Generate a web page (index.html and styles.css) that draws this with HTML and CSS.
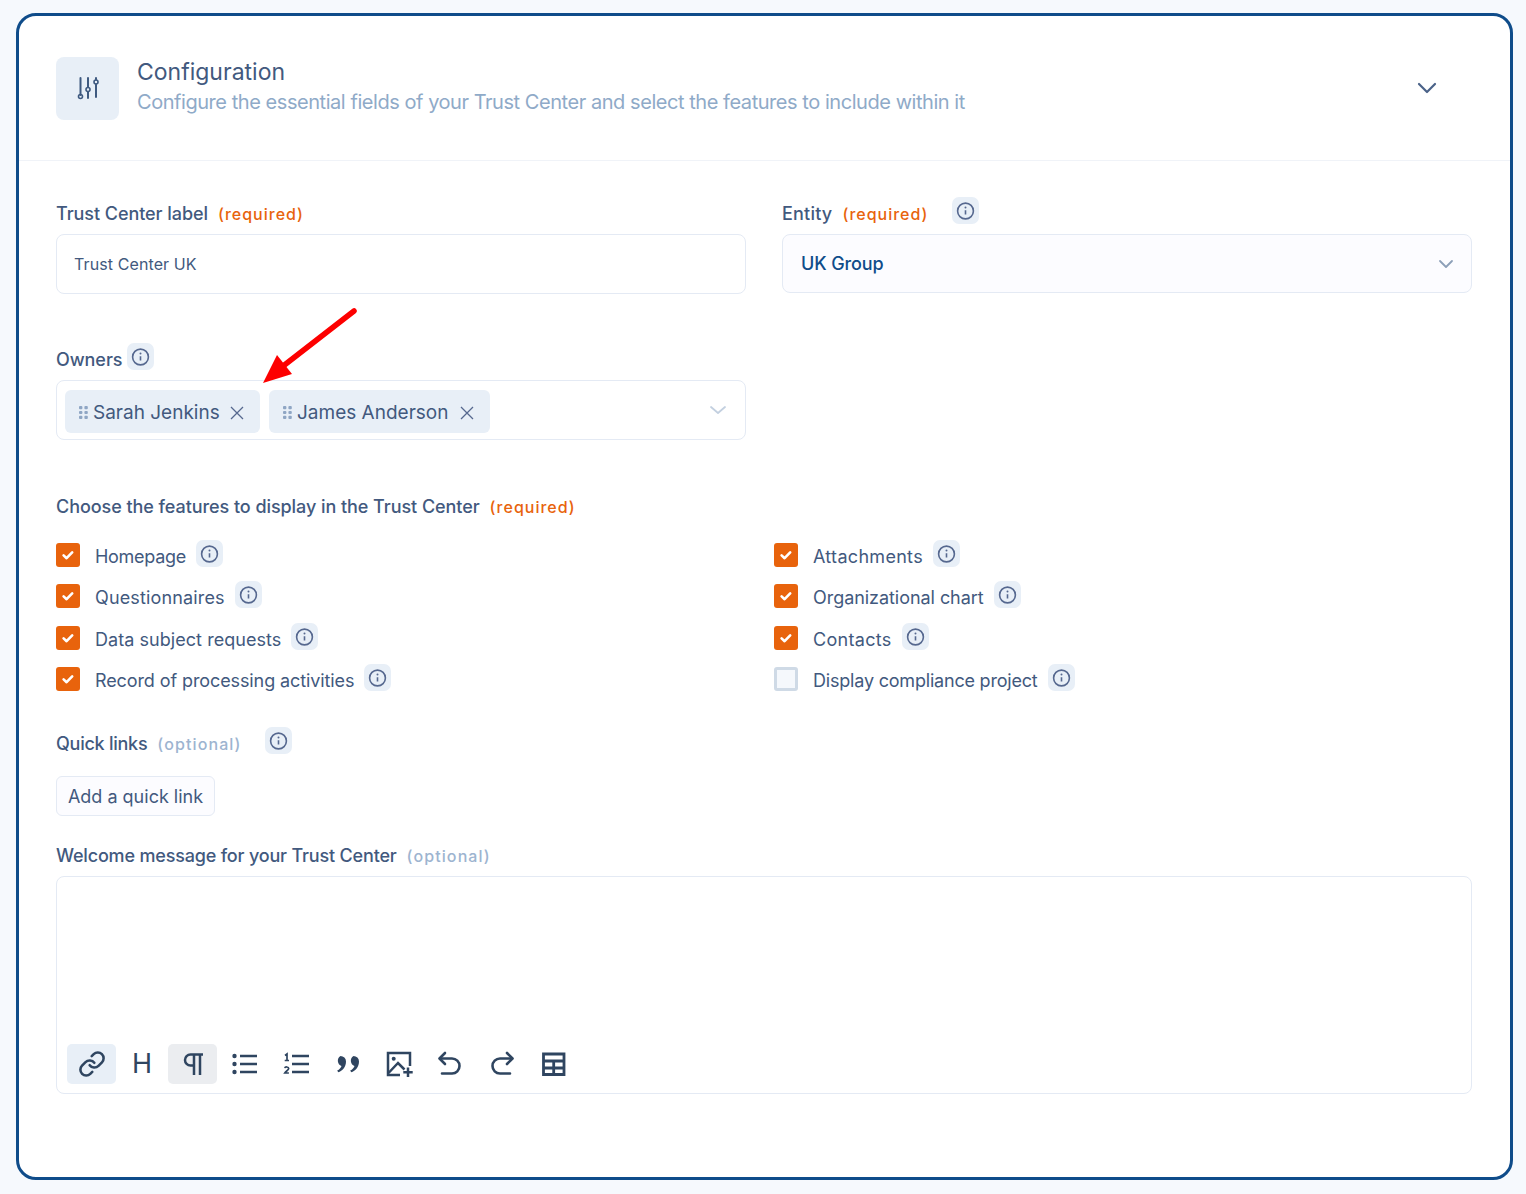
FILE: index.html
```html
<!DOCTYPE html>
<html lang="en">
<head>
<meta charset="utf-8">
<title>Configuration</title>
<link rel="stylesheet" href="styles.css">
</head>
<body>
<svg width="0" height="0" class="defs">
  <symbol id="info" viewBox="0 0 27 27">
    <circle cx="13.500" cy="14" r="7.900" fill="none" stroke="#56688f" stroke-width="1.600"/>
    <path d="M13.500 13.200v4.400" stroke="#56688f" stroke-width="1.600" fill="none"/>
    <circle cx="13.500" cy="10.600" r="1" fill="#56688f"/>
  </symbol>
  <symbol id="check" viewBox="0 0 24 24">
    <path d="M7.600 12.400l3 2.800 5.600-5.800" fill="none" stroke="#fff" stroke-width="2.600" stroke-linecap="round" stroke-linejoin="round"/>
  </symbol>
  <symbol id="grip" viewBox="0 0 9 13">
    <g fill="#8fa6c4"><rect x="0" y="0" width="3.400" height="3.200" rx="1"/><rect x="5.400" y="0" width="3.400" height="3.200" rx="1"/><rect x="0" y="4.900" width="3.400" height="3.200" rx="1"/><rect x="5.400" y="4.900" width="3.400" height="3.200" rx="1"/><rect x="0" y="9.800" width="3.400" height="3.200" rx="1"/><rect x="5.400" y="9.800" width="3.400" height="3.200" rx="1"/></g>
  </symbol>
  <symbol id="close" viewBox="0 0 14 14">
    <path d="M1 1l12 12M13 1L1 13" fill="none" stroke="#56688f" stroke-width="1.300"/>
  </symbol>
</svg>
<main class="card">
  <header class="head">
    <div class="head-icon">
      <svg width="24" height="24" viewBox="0 0 24 24" fill="none" stroke="#3f5a80" stroke-width="2" stroke-linecap="round">
        <path d="M4.500 2v17"/><circle cx="4.500" cy="20.500" r="2" stroke-width="1.600"/>
        <path d="M12 2v9M12 16v6"/><circle cx="12" cy="13.500" r="2" stroke-width="1.600"/>
        <path d="M20 2v1.500M20 8.500V21"/><circle cx="20" cy="6" r="2" stroke-width="1.600"/>
      </svg>
    </div>
    <div class="head-text">
      <h1 class="title">Configuration</h1>
      <p class="subtitle">Configure the essential fields of your Trust Center and select the features to include within it</p>
    </div>
    <svg class="head-chev" width="20" height="12" viewBox="0 0 20 12" fill="none" stroke="#4a6288" stroke-width="2.200" stroke-linecap="round" stroke-linejoin="round"><path d="M2 2l8 8 8-8"/></svg>
  </header>

  <form class="body">
    <div class="two">
      <div class="field">
        <div class="label-row"><span class="label">Trust Center label</span><span class="req">(required)</span></div>
        <div class="input">Trust Center UK</div>
      </div>
      <div class="field">
        <div class="label-row"><span class="label label-wide">Entity</span><span class="req">(required)</span><svg class="chip chip-entity"><use href="#info"/></svg></div>
        <div class="select"><span>UK Group</span>
          <svg width="16" height="10" viewBox="0 0 16 10" fill="none" stroke="#8c9fb8" stroke-width="1.800" stroke-linecap="round" stroke-linejoin="round"><path d="M2 2l6 6 6-6"/></svg>
        </div>
      </div>
    </div>

    <div class="two owners">
      <div class="field">
        <div class="label-row tight"><span class="label">Owners</span><svg class="chip"><use href="#info"/></svg></div>
        <div class="multi">
          <span class="tag tag-a"><svg class="grip"><use href="#grip"/></svg>Sarah Jenkins<svg class="x"><use href="#close"/></svg></span>
          <span class="tag tag-b"><svg class="grip"><use href="#grip"/></svg>James Anderson<svg class="x"><use href="#close"/></svg></span>
          <svg class="multi-chev" width="18" height="10" viewBox="0 0 18 10" fill="none" stroke="#c3d0e0" stroke-width="1.800" stroke-linecap="round" stroke-linejoin="round"><path d="M2 2l7 6 7-6"/></svg>
        </div>
      </div>
    </div>

    <div class="label-row features-label"><span class="label">Choose the features to display in the Trust Center</span><span class="req">(required)</span></div>
    <div class="checks">
      <div class="check-row"><span class="box on"><svg><use href="#check"/></svg></span><span class="check-text narrow-2">Homepage</span><svg class="chip"><use href="#info"/></svg></div>
      <div class="check-row"><span class="box on"><svg><use href="#check"/></svg></span><span class="check-text wide-1">Attachments</span><svg class="chip"><use href="#info"/></svg></div>
      <div class="check-row"><span class="box on"><svg><use href="#check"/></svg></span><span class="check-text wide-2">Questionnaires</span><svg class="chip"><use href="#info"/></svg></div>
      <div class="check-row"><span class="box on"><svg><use href="#check"/></svg></span><span class="check-text narrow-1">Organizational chart</span><svg class="chip"><use href="#info"/></svg></div>
      <div class="check-row"><span class="box on"><svg><use href="#check"/></svg></span><span class="check-text wide-3">Data subject requests</span><svg class="chip"><use href="#info"/></svg></div>
      <div class="check-row"><span class="box on"><svg><use href="#check"/></svg></span><span class="check-text wide-1">Contacts</span><svg class="chip"><use href="#info"/></svg></div>
      <div class="check-row"><span class="box on"><svg><use href="#check"/></svg></span><span class="check-text narrow-3">Record of processing activities</span><svg class="chip"><use href="#info"/></svg></div>
      <div class="check-row"><span class="box off"></span><span class="check-text narrow-4">Display compliance project</span><svg class="chip"><use href="#info"/></svg></div>
    </div>

    <div class="label-row quick-label"><span class="label label-quick">Quick links</span><span class="opt">(optional)</span><svg class="chip chip-quick"><use href="#info"/></svg></div>
    <button type="button" class="add">Add a quick link</button>

    <div class="label-row welcome-label"><span class="label label-welcome">Welcome message for your Trust Center</span><span class="opt">(optional)</span></div>
    <div class="editor">
      <div class="toolbar">
        <span class="tool tool-blue"><svg width="28" height="28" viewBox="0 0 24 24" fill="none" stroke="#2f4560" stroke-width="2.200" stroke-linecap="round" stroke-linejoin="round"><path d="M10 13a5 5 0 0 0 7.540.540l3-3a5 5 0 0 0-7.070-7.070l-1.720 1.710"/><path d="M14 11a5 5 0 0 0-7.540-.540l-3 3a5 5 0 0 0 7.070 7.070l1.710-1.710"/></svg></span>
        <span class="tool tool-h">H</span>
        <span class="tool tool-grey"><svg width="28" height="28" viewBox="0 0 28 28" fill="none" stroke="#2f4560" stroke-width="2.500"><path d="M24 4.500H11.500a5.500 5.500 0 0 0 0 11H15"/><path d="M15 4.500V25M21 4.500V25"/></svg></span>
        <span class="tool"><svg width="28" height="28" viewBox="0 0 28 28" fill="none" stroke="#2f4560" stroke-width="2.700"><path d="M10 6h17M10 14h17M10 22h17"/><g fill="#2f4560" stroke="none"><circle cx="4.500" cy="6" r="2.200"/><circle cx="4.500" cy="14" r="2.200"/><circle cx="4.500" cy="22" r="2.200"/></g></svg></span>
        <span class="tool"><svg width="28" height="28" viewBox="0 0 28 28" fill="none" stroke="#2f4560" stroke-width="2.700"><path d="M10 6h17M10 14h17M10 22h17"/><path d="M3 5.500l2-1.500v6.500M2.700 10.500h4.300" stroke-width="1.700"/><path d="M2.800 18.200c.3-1.700 3.900-1.700 3.900.4 0 1.500-2.500 2.300-3.900 4.400h4.100" stroke-width="1.700"/></svg></span>
        <span class="tool"><svg width="28" height="28" viewBox="0 0 28 28" fill="#2f4560"><path d="M7.500 6a5.500 5.500 0 0 1 5.500 5.500c0 5.500-3.500 9.500-7.800 10.800l-1-1.700c2.200-1.100 3.800-2.900 4.300-4.700A5.500 5.500 0 0 1 7.500 6zM20.500 6a5.500 5.500 0 0 1 5.500 5.500c0 5.500-3.500 9.500-7.800 10.800l-1-1.700c2.200-1.100 3.800-2.900 4.300-4.700A5.500 5.500 0 0 1 20.500 6z"/></svg></span>
        <span class="tool"><svg width="28" height="28" viewBox="0 0 28 28" fill="none" stroke="#2f4560" stroke-width="2.500"><path d="M15 25H3V3h22v13"/><path d="M3.500 23l9.500-10 6.500 6.500"/><circle cx="8.700" cy="8.700" r="2" fill="#2f4560" stroke="none"/><path d="M23 17.500V27M18.300 22.300h9.400"/></svg></span>
        <span class="tool"><svg width="28" height="28" viewBox="0 0 28 28" fill="none" stroke="#2f4560" stroke-width="2.600" stroke-linecap="round" stroke-linejoin="round"><path d="M9 3L3.500 8.500 9 14"/><path d="M4 8.500h12a7.500 7.500 0 0 1 0 15H6"/></svg></span>
        <span class="tool"><svg width="28" height="28" viewBox="0 0 28 28" fill="none" stroke="#2f4560" stroke-width="2.600" stroke-linecap="round" stroke-linejoin="round"><path d="M19 3l5.500 5.500L19 14"/><path d="M24 8.500H12a7.500 7.500 0 0 0 0 15h10"/></svg></span>
        <span class="tool"><svg width="28" height="28" viewBox="0 0 28 28" fill="none" stroke="#2f4560" stroke-width="2.800"><path d="M4.500 4h20.500v20.500H4.500zM4.500 11h20.500M4.500 18h20.500M14.700 11v13.500"/></svg></span>
      </div>
    </div>
  </form>

  <svg class="arrow" width="110" height="90" viewBox="0 0 110 90">
    <path d="M92 4L16 63" stroke="#fd0000" stroke-width="5.500" stroke-linecap="round" fill="none"/>
    <path d="M1 76l14-28 15 19z" fill="#fd0000"/>
  </svg>
</main>
</body>
</html>
```
FILE: styles.css
```css
* { box-sizing: border-box; }
html, body { margin: 0; padding: 0; }
body {
  background: #f6f9fd;
  padding: 13px 13px 14px 16px;
  font-family: "Inter", "Open Sans", sans-serif;
  color: #42597e;
  height: 1194px;
  overflow: hidden;
}
.defs { position: absolute; }
.card {
  position: relative;
  height: 1167px;
  background: #fff;
  border: 3px solid #0f4c8a;
  border-radius: 20px;
}
.head {
  display: flex;
  align-items: center;
  height: 145px;
  padding: 0 73px 0 37px;
  border-bottom: 1px solid #f0f3f8;
}
.head-icon {
  width: 63px;
  height: 63px;
  border-radius: 8px;
  background: #e8eff7;
  display: flex;
  align-items: center;
  justify-content: center;
}
.head-text { margin-left: 18px; flex: 1; padding-bottom: 2px; }
.title { margin: 0; font-size: 23px; line-height: 30px; font-weight: 400; color: #42597e; }
.subtitle { margin: 0; font-size: 20px; line-height: 30px; font-weight: 400; color: #8faac8; letter-spacing: -0.45px; }
.body { padding: 36px 38px 0 37px; }
.two { display: grid; grid-template-columns: 690px 690px; column-gap: 36px; }
.owners { margin-top: 49px; }
.label-row { display: flex; align-items: flex-end; height: 27px; margin-bottom: 10px; }
.label { font-size: 18px; line-height: 20px; font-weight: 500; color: #42597e; letter-spacing: -0.06px; }
.label-wide { letter-spacing: 0.2px; }
.label-quick { letter-spacing: -0.25px; }
.label-welcome { letter-spacing: -0.18px; }
.req, .opt { font-size: 16px; line-height: 20px; font-weight: 500; margin-left: 10px; }
.req { color: #e8630c; letter-spacing: 1px; }
.opt { color: #9db4d0; letter-spacing: 1.1px; }
.chip { width: 27px; height: 27px; border-radius: 7px; background: #e8eff7; flex: none; margin-left: 10px; }
.chip-entity { margin-left: 24px; }
.chip-quick { margin-left: 23px; }
.tight .chip { margin-left: 5px; }
.input {
  height: 60px;
  border: 1px solid #e4eaf4;
  border-radius: 8px;
  padding: 0 17px;
  display: flex;
  align-items: center;
  font-size: 16px;
  letter-spacing: 0.1px;
  color: #42597e;
}
.select {
  height: 59px;
  border: 1px solid #e4eaf4;
  border-radius: 8px;
  background: #fcfcff;
  padding: 0 17px 0 18px;
  display: flex;
  align-items: center;
  justify-content: space-between;
  font-size: 18px;
  font-weight: 450;
  letter-spacing: -0.12px;
  color: #0f4c8a;
}
.multi {
  height: 60px;
  border: 1px solid #e4eaf4;
  border-radius: 8px;
  padding: 9px 8px;
  display: flex;
  align-items: flex-start;
  gap: 9px;
}
.multi-chev { margin-left: auto; margin-right: 10px; margin-top: 15px; }
.tag {
  display: flex;
  align-items: center;
  height: 43px;
  border-radius: 6px;
  background: #e8eff7;
  padding: 2px 0 0 14px;
  font-size: 19px;
  color: #42597e;
}
.tag-a { width: 195px; }
.tag-b { width: 221px; }
.grip { width: 9px; height: 13px; margin-right: 5px; flex: none; }
.x { width: 14px; height: 14px; margin-left: auto; margin-right: 16px; flex: none; }
.features-label { margin-top: 37px; margin-bottom: 0; height: 40px; align-items: flex-start; padding-top: 20px; }
.checks {
  display: grid;
  grid-template-columns: 718px 1fr;
  row-gap: 14.33px;
  margin-top: 23px;
}
.check-row { display: flex; align-items: flex-end; height: 27px; }
.box { width: 24px; height: 24px; border-radius: 3px; flex: none; }
.box svg { width: 24px; height: 24px; display: block; }
.on { background: #e8630c; }
.off { background: #f5f8fc; border: 3px solid #cfdae6; }
.check-text { margin-left: 15px; font-size: 18px; line-height: 20px; color: #42597e; }
.wide-1 { letter-spacing: 0.3px; }
.wide-2 { letter-spacing: 0.15px; }
.wide-3 { letter-spacing: 0.05px; }
.narrow-1 { letter-spacing: -0.05px; }
.narrow-2 { letter-spacing: -0.3px; }
.narrow-3 { letter-spacing: -0.1px; }
.narrow-4 { letter-spacing: -0.2px; }
.quick-label { margin-top: 36px; margin-bottom: 22px; }
.add {
  display: block;
  width: 159px;
  height: 40px;
  border: 1px solid #e4eaf4;
  border-radius: 6px;
  background: #fcfcff;
  padding: 2px 0 0;
  font-family: inherit;
  font-size: 18px;
  color: #42597e;
}
.welcome-label { margin-top: 23px; }
.editor {
  height: 218px;
  border: 1px solid #e4eaf4;
  border-radius: 8px;
  padding: 167px 10px 0;
}
.toolbar { display: flex; gap: 2.5px; }
.tool {
  width: 49px;
  height: 40px;
  border-radius: 5px;
  display: flex;
  align-items: center;
  justify-content: center;
}
.tool-blue { background: #e8eff7; }
.tool-grey { background: #ebedf0; }
.tool-h { width: 47px; font-size: 27px; font-weight: 400; color: #2f4560; }
.arrow { position: absolute; left: 243px; top: 291px; }
```
